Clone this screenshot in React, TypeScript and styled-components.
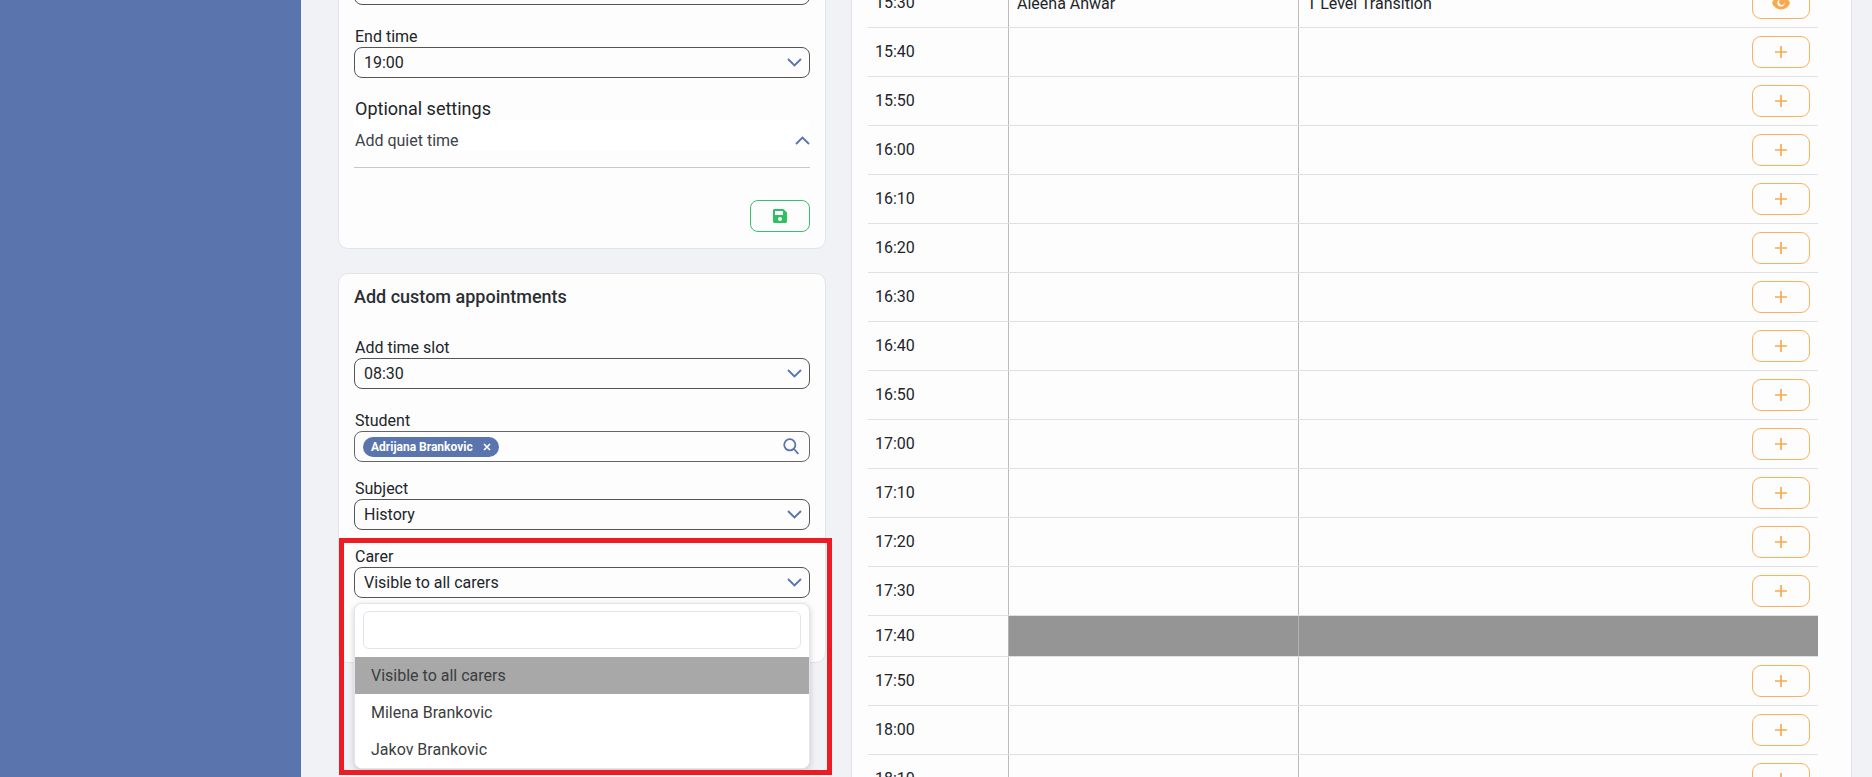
import React from 'react';
import styled, { createGlobalStyle } from 'styled-components';
import { FaSave } from 'react-icons/fa';

const Global = createGlobalStyle`
  html, body { margin: 0; padding: 0; height: 100%; overflow: hidden; }
  body { background: #f0f2f6; font-family: Roboto, "Liberation Sans", sans-serif; color: #212529; }
  * { box-sizing: border-box; }
`;

const Page = styled.div`
  display: flex;
  height: 777px;
  overflow: hidden;
`;
const Sidebar = styled.aside`
  flex: 0 0 301px;
  background: #5a74ae;
`;
const Main = styled.main`
  flex: 1;
  display: flex;
  align-items: flex-start;
  gap: 25px;
  padding: 0 20px 0 37px;
`;
const LeftColumn = styled.div`
  flex: 0 0 488px;
  display: flex;
  flex-direction: column;
  gap: 24px;
  margin-top: -43px;
`;
const Card = styled.section`
  position: relative;
  background: #fdfdfd;
  border: 1px solid #e2e4ea;
  border-radius: 10px;
  padding: 16px 15px;
`;
const AppointmentsCard = styled(Card)`
  padding-top: 13px;
  padding-bottom: 64px;
`;
const CardTitle = styled.h2`
  margin: 0 0 30px;
  font-size: 18px;
  line-height: 20px;
  font-weight: 500;
  color: #2b2f33;
`;
const Field = styled.div<{ $gap?: number }>`
  position: relative;
  margin-top: ${p => p.$gap ?? 0}px;
`;
const Label = styled.label`
  display: block;
  padding: 1px 0 0 1px;
  font-size: 16px;
  line-height: 20px;
  color: #212529;
`;
const SelectBox = styled.div`
  height: 31px;
  border: 1px solid #555;
  border-radius: 8px;
  background: #fdfdfd;
  display: flex;
  align-items: center;
  justify-content: space-between;
  padding: 0 7px 0 9px;
  font-size: 16px;
  color: #212529;
`;
const ClippedSelect = styled(SelectBox)`
  justify-content: flex-end;
`;
const TagBox = styled(SelectBox)`
  padding: 0 10px 0 8px;
  border-color: #666;
`;
const Chip = styled.span`
  display: inline-flex;
  align-items: center;
  gap: 10px;
  height: 20px;
  padding: 0 8px;
  border-radius: 10px;
  background: #5a74ae;
  color: #fff;
  font-size: 12px;
  font-weight: 700;
`;
const OptionalHeading = styled.h3`
  margin: 20px 0 0;
  padding-left: 1px;
  font-size: 18px;
  line-height: 22px;
  font-weight: 400;
  color: #212529;
`;
const QuietRow = styled.div`
  height: 30px;
  padding: 10px 0 0 1px;
  display: flex;
  align-items: center;
  justify-content: space-between;
  background: #fff;
  font-size: 16px;
  color: #3d4348;
`;
const Divider = styled.hr`
  margin: 17px 0 0;
  border: 0;
  border-top: 1px solid #c8c8c8;
`;
const Actions = styled.div`
  display: flex;
  justify-content: flex-end;
  margin-top: 32px;
`;
const SaveButton = styled.button`
  width: 60px;
  height: 32px;
  border: 1px solid #36c26a;
  border-radius: 8px;
  background: transparent;
  color: #2fc063;
  display: flex;
  align-items: center;
  justify-content: center;
  font-size: 16px;
  padding: 0;
`;
const Highlight = styled.div`
  position: absolute;
  left: -15px;
  top: -8px;
  width: 493px;
  height: 237px;
  border: 5px solid #ed1c24;
  pointer-events: none;
  z-index: 3;
`;
const Dropdown = styled.div`
  position: absolute;
  left: 0;
  right: 0;
  top: 57px;
  height: 166px;
  background: #fff;
  border: 1px solid #e4e4ea;
  border-radius: 8px;
  box-shadow: 0 2px 6px rgba(0, 0, 0, 0.18);
  overflow: hidden;
  z-index: 2;
`;
const SearchInput = styled.div`
  height: 38px;
  margin: 7px 8px 8px;
  border: 1px solid #e2e3ec;
  border-radius: 6px;
  background: #fff;
`;
const Option = styled.div<{ $active?: boolean }>`
  height: 37px;
  padding: 0 16px;
  display: flex;
  align-items: center;
  font-size: 16px;
  color: #3a3d40;
  background: ${p => (p.$active ? '#a8a8a8' : '#fff')};
`;
const ScheduleCard = styled(Card)`
  flex: 1;
  margin-top: -40px;
  padding: 18px 33px 0 16px;
`;
const Row = styled.div<{ $blocked?: boolean }>`
  display: grid;
  grid-template-columns: 140px 290px 1fr;
  height: ${p => (p.$blocked ? 41 : 49)}px;
  border-bottom: 1px solid #dfdfe6;
`;
const TimeCell = styled.div`
  display: flex;
  align-items: center;
  padding: 0 0 1px 7px;
  font-size: 16px;
  font-weight: 400;
  color: #212529;
`;
const Cell = styled.div<{ $blocked?: boolean }>`
  display: flex;
  align-items: center;
  justify-content: space-between;
  padding: 0 8px;
  border-left: 1px solid ${p => (p.$blocked ? '#b5b5b5' : '#bcbcbc')};
  background: ${p => (p.$blocked ? '#959595' : 'transparent')};
  font-size: 16px;
  color: #212529;
`;
const ActionButton = styled.button`
  width: 58px;
  height: 32px;
  margin-left: auto;
  border: 1px solid #f9b25f;
  border-radius: 9px;
  background: transparent;
  display: flex;
  align-items: center;
  justify-content: center;
  padding: 0;
`;

const Chevron = ({ up }: { up?: boolean }) => (
  <svg width="15" height="9" viewBox="0 0 15 9" fill="none" stroke="#5a74ae" strokeWidth="1.9">
    <path d={up ? 'M1 8L7.5 1.5L14 8' : 'M1 1L7.5 7.5L14 1'} />
  </svg>
);
const SearchIcon = () => (
  <svg width="16" height="17" viewBox="0 0 16 17" fill="none" stroke="#5a74ae" strokeWidth="1.8">
    <circle cx="6.8" cy="6.8" r="5.6" />
    <path d="M11 11L15.3 15.8" />
  </svg>
);
const PlusIcon = () => (
  <svg width="14" height="14" viewBox="0 0 14 14" stroke="#f9a94b" strokeWidth="1.7">
    <path d="M1 7H13M7 1V13" />
  </svg>
);
const CloseIcon = () => (
  <svg width="8" height="8" viewBox="0 0 8 8" stroke="#fff" strokeWidth="1.6">
    <path d="M1 1L7 7M7 1L1 7" />
  </svg>
);
const EyeIcon = () => (
  <svg width="18" height="14" viewBox="0 0 18 14">
    <path d="M0 7C3 -1.5 15 -1.5 18 7C15 15.5 3 15.5 0 7Z" fill="#f9a94b" />
    <circle cx="9" cy="7" r="3.6" fill="#fdfdfd" />
    <circle cx="9.9" cy="6.1" r="2.8" fill="#f9a94b" />
  </svg>
);

const Select = ({ value }: { value: string }) => (
  <SelectBox>
    {value}
    <Chevron />
  </SelectBox>
);

const times = ['15:40', '15:50', '16:00', '16:10', '16:20', '16:30', '16:40', '16:50', '17:00', '17:10', '17:20', '17:30'];
const laterTimes = ['17:50', '18:00', '18:10'];

const EmptyRow = ({ time }: { time: string }) => (
  <Row>
    <TimeCell>{time}</TimeCell>
    <Cell />
    <Cell>
      <ActionButton>
        <PlusIcon />
      </ActionButton>
    </Cell>
  </Row>
);

export default function App() {
  return (
    <Page>
      <Global />
      <Sidebar />
      <Main>
        <LeftColumn>
          <Card>
            <ClippedSelect>
              <Chevron />
            </ClippedSelect>
            <Field $gap={21}>
              <Label>End time</Label>
              <Select value="19:00" />
            </Field>
            <OptionalHeading>Optional settings</OptionalHeading>
            <QuietRow>
              Add quiet time
              <Chevron up />
            </QuietRow>
            <Divider />
            <Actions>
              <SaveButton>
                <FaSave />
              </SaveButton>
            </Actions>
          </Card>
          <AppointmentsCard>
            <CardTitle>Add custom appointments</CardTitle>
            <Field>
              <Label>Add time slot</Label>
              <Select value="08:30" />
            </Field>
            <Field $gap={21}>
              <Label>Student</Label>
              <TagBox>
                <Chip>
                  Adrijana Brankovic
                  <CloseIcon />
                </Chip>
                <SearchIcon />
              </TagBox>
            </Field>
            <Field $gap={16}>
              <Label>Subject</Label>
              <Select value="History" />
            </Field>
            <Field $gap={16}>
              <Label>Carer</Label>
              <Select value="Visible to all carers" />
              <Dropdown>
                <SearchInput />
                <Option $active>Visible to all carers</Option>
                <Option>Milena Brankovic</Option>
                <Option>Jakov Brankovic</Option>
              </Dropdown>
              <Highlight />
            </Field>
          </AppointmentsCard>
        </LeftColumn>
        <ScheduleCard>
          <Row>
            <TimeCell>15:30</TimeCell>
            <Cell>Aleena Anwar</Cell>
            <Cell>
              T Level Transition
              <ActionButton>
                <EyeIcon />
              </ActionButton>
            </Cell>
          </Row>
          {times.map(t => (
            <EmptyRow key={t} time={t} />
          ))}
          <Row $blocked>
            <TimeCell>17:40</TimeCell>
            <Cell $blocked />
            <Cell $blocked />
          </Row>
          {laterTimes.map(t => (
            <EmptyRow key={t} time={t} />
          ))}
        </ScheduleCard>
      </Main>
    </Page>
  );
}
